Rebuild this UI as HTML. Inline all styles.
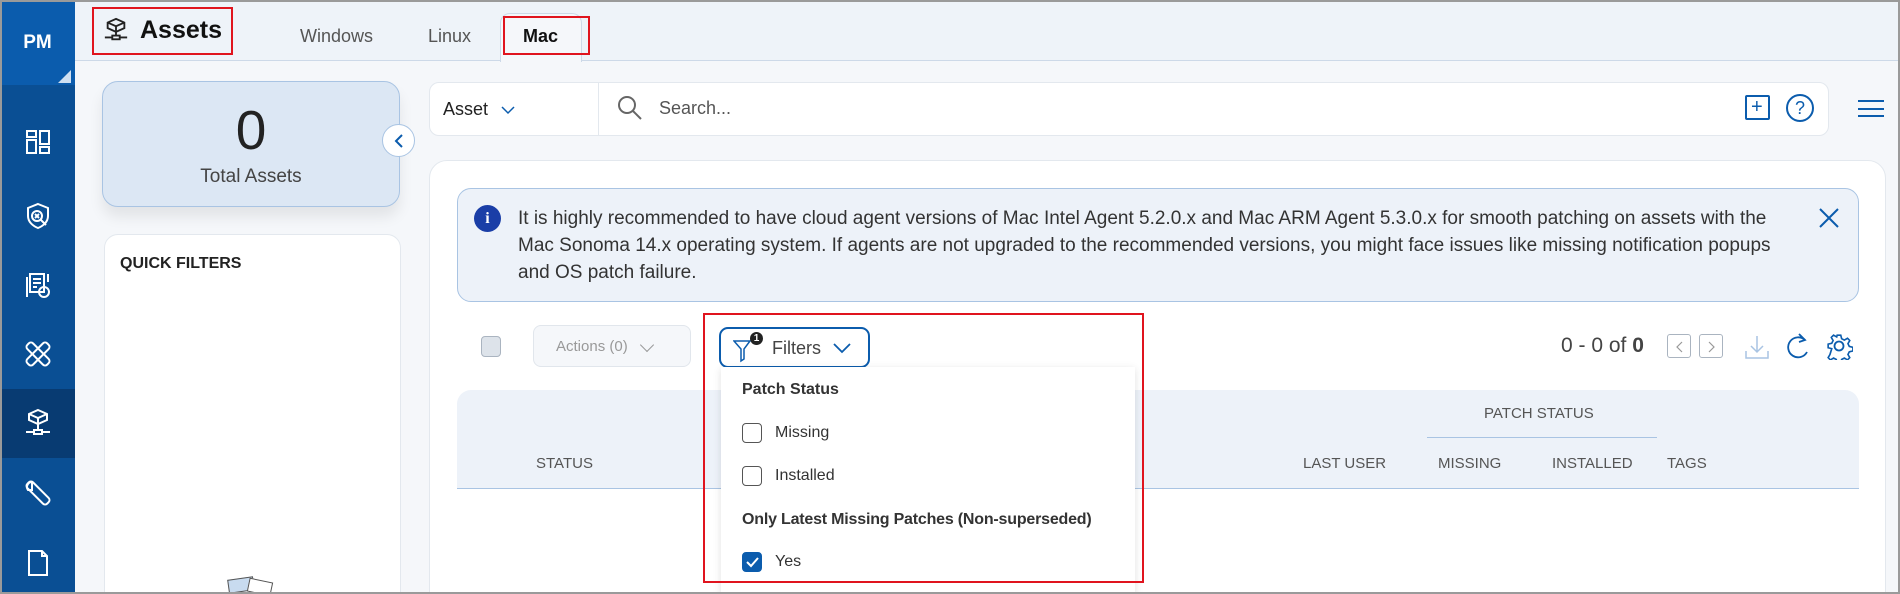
<!DOCTYPE html>
<html style="width:1900px;height:594px;overflow:hidden"><head><meta charset="utf-8"><style>
*{box-sizing:border-box;margin:0;padding:0}
html,body{overflow:hidden}
body{width:1900px;height:594px;overflow:hidden;font-family:"Liberation Sans",sans-serif;background:#f5f7fa;position:relative;color:#333}
.abs{position:absolute}
.frame{position:absolute;left:0;top:0;width:1900px;height:594px;border:2px solid #9a9a9a;pointer-events:none;z-index:50}
.side{left:0;top:0;width:75px;height:594px;background:#0a4f94}
.pm{left:0;top:0;width:75px;height:85px;background:#0b5cad;color:#fff;font-weight:bold;font-size:19px;text-align:center;line-height:86px}
.ico{left:0;width:75px;height:40px;display:flex;align-items:center;justify-content:center}
.hdr{left:75px;top:0;width:1825px;height:61px;background:#eef3f9;border-bottom:1px solid #cdd9e8}
.tab{top:26px;font-size:18px;color:#555}
.red{border:2px solid #e0141e}
.card{background:#fff;border:1px solid #e3e8ee;border-radius:14px}
.th{font-size:15px;color:#555;top:455px}
.item{left:742px;font-size:16px;color:#333;display:flex;align-items:center}
.cb{width:20px;height:20px;border:1.5px solid #555;border-radius:4px;margin-right:13px;background:#fff}
</style></head><body>
<div class="abs side"></div>
<div class="abs pm">PM</div>
<div class="abs" style="left:58px;top:70px;width:0;height:0;border-left:13px solid transparent;border-bottom:13px solid #cfe0f2"></div>
<div class="abs" style="left:0;top:389px;width:75px;height:69px;background:#083b72"></div>
<div class="abs ico" style="top:122px"><svg width="26" height="26" viewBox="0 0 26 26" fill="none" stroke="#fff" stroke-width="2"><rect x="2" y="2" width="9" height="6"/><rect x="2" y="11" width="9" height="13"/><rect x="15" y="2" width="9" height="13"/><rect x="15" y="18" width="9" height="6"/></svg></div>
<div class="abs ico" style="top:196px"><svg width="26" height="28" viewBox="0 0 26 28" fill="none" stroke="#fff" stroke-width="2"><path d="M13 2l10 4v8c0 6-5 10-10 12C8 24 3 20 3 14V6z"/><circle cx="12" cy="14" r="5"/><path d="M10 12l4 4M14 12l-4 4M16 18l5 5"/></svg></div>
<div class="abs ico" style="top:265px"><svg width="28" height="28" viewBox="0 0 28 28" fill="none" stroke="#fff" stroke-width="2"><rect x="6" y="3" width="14" height="18"/><path d="M9 8h8M9 12h8M9 16h4M3 6v20M24 3v8"/><circle cx="20" cy="21" r="5"/></svg></div>
<div class="abs ico" style="top:334px"><svg width="30" height="30" viewBox="0 0 30 30" fill="none" stroke="#fff" stroke-width="2"><rect x="11" y="1" width="8" height="28" rx="3" transform="rotate(45 15 15)"/><rect x="11" y="1" width="8" height="28" rx="3" transform="rotate(-45 15 15)"/></svg></div>
<div class="abs ico" style="top:402px"><svg width="30" height="30" viewBox="0 0 30 30" fill="none" stroke="#fff" stroke-width="2"><path d="M15 3l9 4v6l-9 4-9-4V7z"/><path d="M6 7l9 4 9-4M15 11v6M15 17v6"/><rect x="11" y="23" width="8" height="4"/><path d="M3 25h8M19 25h8"/></svg></div>
<div class="abs ico" style="top:473px"><svg width="30" height="30" viewBox="0 0 30 30" fill="none" stroke="#fff" stroke-width="2"><rect x="11" y="1" width="8" height="28" rx="3" transform="rotate(-45 15 15)"/><path d="M9 4a5 5 0 0 0-4 8l4 0 0-4z"/></svg></div>
<div class="abs ico" style="top:543px"><svg width="24" height="28" viewBox="0 0 24 28" fill="none" stroke="#fff" stroke-width="2"><path d="M3 2h13l5 5v19H3z"/><path d="M16 2v5h5"/></svg></div>

<div class="abs hdr"></div>
<div class="abs" style="left:500px;top:13px;width:82px;height:49px;background:#f5f7fa;border:1px solid #cdd9e8;border-bottom:none;border-radius:10px 10px 0 0"></div>
<div class="abs red" style="left:92px;top:7px;width:141px;height:48px"></div>
<div class="abs" style="left:103px;top:17px"><svg width="26" height="26" viewBox="0 0 26 28" fill="none" stroke="#222" stroke-width="2"><path d="M13 2l9 4v6l-9 4-9-4V6z"/><path d="M4 6l9 4 9-4M13 10v6M13 16v4"/><rect x="9" y="20" width="8" height="4"/><path d="M1 22h8M17 22h8"/></svg></div>
<div class="abs" style="left:140px;top:16px;font-size:25px;font-weight:bold;color:#111">Assets</div>
<div class="abs tab" style="left:300px">Windows</div>
<div class="abs tab" style="left:428px">Linux</div>
<div class="abs red" style="left:503px;top:16px;width:87px;height:39px"></div>
<div class="abs tab" style="left:523px;font-weight:bold;color:#111">Mac</div>

<div class="abs" style="left:102px;top:81px;width:298px;height:126px;background:#dce7f4;border:1px solid #a9c4e3;border-radius:16px;box-shadow:0 10px 14px rgba(0,0,0,.08)"></div>
<div class="abs" style="left:102px;top:98px;width:298px;text-align:center;font-size:55px;color:#222">0</div>
<div class="abs" style="left:102px;top:166px;width:298px;text-align:center;font-size:19px;color:#444">Total Assets</div>
<div class="abs" style="left:382px;top:124px;width:33px;height:33px;border-radius:50%;background:#fff;border:1px solid #a9c4e3;display:flex;align-items:center;justify-content:center"><svg width="12" height="16" viewBox="0 0 12 16"><path d="M9 2L3 8l6 6" fill="none" stroke="#0b5cad" stroke-width="2"/></svg></div>
<div class="abs card" style="left:104px;top:234px;width:297px;height:380px"></div>
<div class="abs" style="left:120px;top:255px;font-size:16px;font-weight:bold;color:#222">QUICK FILTERS</div>
<div class="abs" style="left:228px;top:578px;width:26px;height:14px;background:#c8dbef;border:1px solid #555;transform:rotate(-8deg)"></div>
<div class="abs" style="left:248px;top:580px;width:24px;height:14px;background:#fff;border:1px solid #555;transform:rotate(12deg)"></div>

<div class="abs card" style="left:429px;top:82px;width:1400px;height:54px;border-radius:10px"></div>
<div class="abs" style="left:598px;top:83px;width:1px;height:52px;background:#e3e8ee"></div>
<div class="abs" style="left:443px;top:99px;font-size:18px;color:#222">Asset</div>
<div class="abs" style="left:501px;top:102px"><svg width="14" height="10"><path d="M1 2l6 6 6-6" fill="none" stroke="#0b5cad" stroke-width="1.5"/></svg></div>
<div class="abs" style="left:617px;top:95px"><svg width="26" height="26" viewBox="0 0 26 26" fill="none" stroke="#666" stroke-width="2"><circle cx="10" cy="10" r="8"/><path d="M16 16l8 8"/></svg></div>
<div class="abs" style="left:659px;top:98px;font-size:18px;color:#555">Search...</div>
<div class="abs" style="left:1745px;top:95px;width:25px;height:25px;border:2px solid #0b5cad;border-radius:2px"></div>
<div class="abs" style="left:1751px;top:97px;font-size:20px;color:#0b5cad;line-height:20px">+</div>
<div class="abs" style="left:1786px;top:94px;width:28px;height:28px;border:2px solid #0b5cad;border-radius:50%;text-align:center;font-size:18px;line-height:24px;color:#0b5cad">?</div>
<div class="abs" style="left:1858px;top:100px;width:26px;height:17px;border-top:2px solid #0b5cad;border-bottom:2px solid #0b5cad"></div>
<div class="abs" style="left:1858px;top:108px;width:26px;height:2px;background:#0b5cad"></div>

<div class="abs card" style="left:429px;top:160px;width:1457px;height:460px;border-radius:18px"></div>
<div class="abs" style="left:457px;top:188px;width:1402px;height:114px;background:#edf2f9;border:1.5px solid #a9c4e3;border-radius:14px"></div>
<div class="abs" style="left:474px;top:205px;width:27px;height:27px;border-radius:50%;background:#1a3ea7;color:#fff;text-align:center;font-size:16px;font-weight:bold;line-height:27px;font-family:'Liberation Serif',serif">i</div>
<div class="abs" style="left:518px;top:205px;font-size:19px;line-height:27px;color:#333;white-space:nowrap">It is highly recommended to have cloud agent versions of Mac Intel Agent 5.2.0.x and Mac ARM Agent 5.3.0.x for smooth patching on assets with the<br>Mac Sonoma 14.x operating system. If agents are not upgraded to the recommended versions, you might face issues like missing notification popups<br>and OS patch failure.</div>
<div class="abs" style="left:1818px;top:207px"><svg width="22" height="22"><path d="M2 2l18 18M20 2L2 20" stroke="#0b5cad" stroke-width="2"/></svg></div>

<div class="abs" style="left:481px;top:336px;width:20px;height:21px;background:#dde3ea;border:1px solid #aab4c0;border-radius:4px"></div>
<div class="abs" style="left:533px;top:325px;width:158px;height:42px;background:#f5f7fa;border:1px solid #e1e6ec;border-radius:8px;font-size:15px;color:#999;padding:12px 0 0 22px">Actions (0) <span style="display:inline-block;width:10px;height:10px;border-right:1.5px solid #999;border-bottom:1.5px solid #999;transform:rotate(45deg);margin:-4px 0 0 10px;vertical-align:middle"></span></div>
<div class="abs red" style="left:703px;top:313px;width:441px;height:270px;z-index:5"></div>
<div class="abs" style="left:719px;top:327px;width:151px;height:41px;border:2px solid #0b5cad;border-radius:9px;background:#fff"></div>
<div class="abs" style="left:733px;top:337px"><svg width="24" height="26" viewBox="0 0 24 26" fill="none" stroke="#0b5cad" stroke-width="1.5"><path d="M1 4h16l-6 8v10l-3 2V12z"/></svg></div>
<div class="abs" style="left:750px;top:332px;width:13px;height:13px;border-radius:50%;background:#222;color:#fff;font-size:10px;text-align:center;line-height:13px;font-weight:bold">1</div>
<div class="abs" style="left:772px;top:338px;font-size:18px;color:#444">Filters</div>
<div class="abs" style="left:833px;top:341px"><svg width="18" height="12"><path d="M1 2l8 8 8-8" fill="none" stroke="#0b5cad" stroke-width="1.8"/></svg></div>

<div class="abs" style="left:1561px;top:334px;font-size:21px;color:#444">0 - 0 of <b>0</b></div>
<div class="abs" style="left:1667px;top:334px;width:24px;height:24px;border:1px solid #aab4c0;border-radius:3px"></div>
<div class="abs" style="left:1675px;top:340px"><svg width="8" height="12"><path d="M7 1L2 6l5 5" fill="none" stroke="#999" stroke-width="1.2"/></svg></div>
<div class="abs" style="left:1699px;top:334px;width:24px;height:24px;border:1px solid #aab4c0;border-radius:3px"></div>
<div class="abs" style="left:1708px;top:340px"><svg width="8" height="12"><path d="M1 1l5 5-5 5" fill="none" stroke="#999" stroke-width="1.2"/></svg></div>
<div class="abs" style="left:1743px;top:333px"><svg width="28" height="28" viewBox="0 0 28 28" fill="none" stroke="#a9c4e3" stroke-width="1.5"><path d="M14 3v16M8 13l6 6 6-6M3 18v7h22v-7"/></svg></div>
<div class="abs" style="left:1785px;top:332px"><svg width="28" height="30" viewBox="0 0 28 30" fill="none" stroke="#0b5cad" stroke-width="1.8"><path d="M20 8A10 10 0 1 0 22 20"/><path d="M14 2l6 6-6 2"/></svg></div>
<div class="abs" style="left:1825px;top:332px"><svg width="28" height="28" viewBox="0 0 28 28" fill="none" stroke="#0b5cad" stroke-width="1.8"><circle cx="14" cy="14" r="4.5"/><path d="M12 2h4l1 4 3 1.5 3.5-2 2.5 2.5-2 3.5 1.5 3 4 1v4l-4 1-1.5 3 2 3.5-2.5 2.5-3.5-2-3 1.5-1 4h-4l-1-4-3-1.5-3.5 2-2.5-2.5 2-3.5L6 17l-4-1v-4l4-1 1.5-3-2-3.5L8 2l3.5 2z" transform="scale(.9) translate(1.5 1.5)"/></svg></div>

<div class="abs" style="left:457px;top:390px;width:1402px;height:99px;background:#edf2f9;border-bottom:1.5px solid #a9c4e3;border-radius:14px 14px 0 0"></div>
<div class="abs th" style="left:536px">STATUS</div>
<div class="abs th" style="left:1303px">LAST USER</div>
<div class="abs th" style="left:1438px">MISSING</div>
<div class="abs th" style="left:1552px">INSTALLED</div>
<div class="abs th" style="left:1667px">TAGS</div>
<div class="abs th" style="left:1484px;top:405px">PATCH STATUS</div>
<div class="abs" style="left:1427px;top:437px;width:230px;height:1px;background:#a9c4e3"></div>

<div class="abs" style="left:721px;top:367px;width:414px;height:227px;background:#fff;box-shadow:0 2px 8px rgba(0,0,0,.12)"></div>
<div class="abs" style="left:742px;top:381px;font-size:16px;font-weight:bold;color:#333">Patch Status</div>
<div class="abs item" style="top:423px"><span class="cb"></span>Missing</div>
<div class="abs item" style="top:466px"><span class="cb"></span>Installed</div>
<div class="abs" style="left:742px;top:511px;font-size:16px;font-weight:bold;color:#333;letter-spacing:-0.2px">Only Latest Missing Patches (Non-superseded)</div>
<div class="abs item" style="top:552px"><span class="cb" style="background:#0b5cad;border-color:#0b5cad;display:flex;align-items:center;justify-content:center"><svg width="14" height="12"><path d="M2 6l4 4 7-8" fill="none" stroke="#fff" stroke-width="2"/></svg></span>Yes</div>
<div class="frame"></div>
</body></html>
